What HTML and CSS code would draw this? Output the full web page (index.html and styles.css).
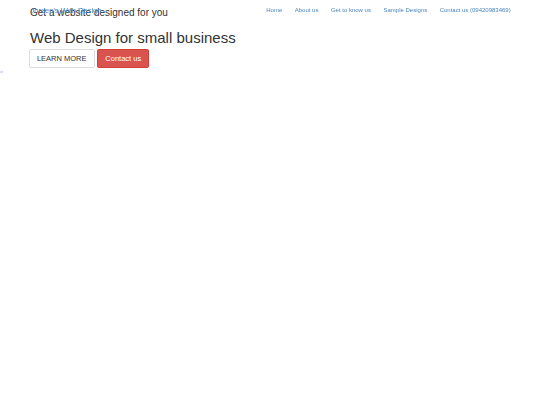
FILE: index.html
```html
<!DOCTYPE html>
<html>
<head>
<meta charset="utf-8">
<link rel="stylesheet" href="styles.css">
</head>
<body>
<nav class="navbar">
  <a class="brand" href="#">Jorden's Web Design</a>
  <ul class="nav-links">
    <li><a href="#">Home</a></li>
    <li><a href="#">About us</a></li>
    <li><a href="#">Get to know us</a></li>
    <li><a href="#">Sample Designs</a></li>
    <li><a href="#">Contact us (09420983469)</a></li>
  </ul>
</nav>
<header class="hero">
  <h1 class="hero-sub">Get a website designed for you</h1>
  <h2 class="hero-title">Web Design for small business</h2>
  <div class="hero-actions">
    <a class="btn btn-default" href="#">LEARN MORE</a>
    <a class="btn btn-danger" href="#">Contact us</a>
  </div>
</header>
<div class="stray"><span class="stray-text">ie</span></div>
</body>
</html>
```
FILE: styles.css
```css
html, body {
  margin: 0;
  padding: 0;
  background: #fff;
  font-family: "Liberation Sans", Arial, sans-serif;
  color: #333;
}

.navbar {
  position: fixed;
  top: 0;
  left: 0;
  right: 0;
  height: 20px;
  display: flex;
  align-items: flex-start;
  justify-content: space-between;
  padding: 0 29.3px 0 30.5px;
}

.brand {
  font-size: 7.5px;
  line-height: 7.5px;
  margin-top: 6.6px;
  color: #4a86c0;
  text-decoration: none;
}

.nav-links {
  list-style: none;
  margin: 7.4px 0 0 0;
  padding: 0;
  display: flex;
  gap: 12.5px;
  font-size: 6px;
  line-height: 6px;
}

.nav-links li {
  font-size: 6px;
  line-height: 6px;
}

.nav-links a {
  color: #4a86c0;
  text-decoration: none;
}

.hero {
  padding: 6.5px 0 0 30px;
}

.hero-sub {
  margin: 0;
  font-size: 10px;
  line-height: 11px;
  font-weight: normal;
  color: #333;
}

.hero-title {
  margin: 12px 0 0 0;
  font-size: 15px;
  line-height: 16.5px;
  font-weight: normal;
  color: #333;
}

.hero-actions {
  display: flex;
  gap: 2.7px;
  margin-top: 2.7px;
  margin-left: -1.3px;
}

.btn {
  display: inline-block;
  box-sizing: border-box;
  height: 19.3px;
  line-height: 17.3px;
  font-size: 7.5px;
  padding: 0 7px;
  border: 1px solid transparent;
  border-radius: 2px;
  text-decoration: none;
}

.btn-default {
  color: #333;
  background: #fff;
  border-color: #dcdcdc;
  padding: 0 7.2px;
}

.btn-danger {
  color: #fff;
  background: #d9534f;
  border-color: #d43f3a;
}

.stray {
  height: 6px;
  margin-top: 0.6px;
  overflow: hidden;
}

.stray-text {
  display: block;
  font-size: 4px;
  line-height: 6px;
  color: #8fb3da;
  width: 5px;
  overflow: hidden;
}
```
